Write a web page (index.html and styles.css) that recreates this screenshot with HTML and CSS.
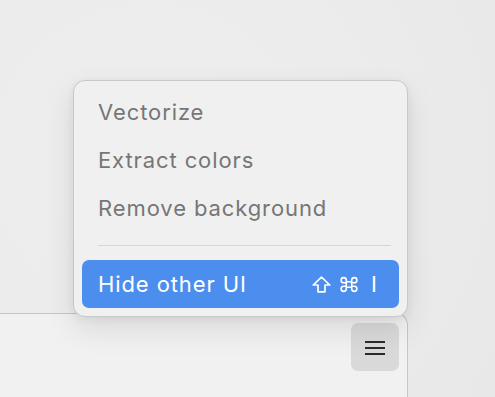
FILE: index.html
```html
<!DOCTYPE html>
<html>
<head>
<meta charset="utf-8">
<link rel="stylesheet" href="styles.css">
</head>
<body>
<div class="stage">
  <div class="panel">
    <button class="menu-btn" aria-label="Menu">
      <svg width="20" height="16" viewBox="0 0 20 16"><rect x="0" y="2" width="20" height="2" fill="#2a2a2a"/><rect x="0" y="8" width="20" height="2" fill="#2a2a2a"/><rect x="0" y="14" width="20" height="2" fill="#2a2a2a"/></svg>
    </button>
  </div>
  <div class="menu">
    <div class="item">Vectorize</div>
    <div class="item">Extract colors</div>
    <div class="item">Remove background</div>
    <div class="sep"></div>
    <div class="item active">
      <span>Hide other UI</span>
      <span class="keys">
        <svg class="k-shift" width="19" height="17" viewBox="0 0 19 17"><path d="M9.5 1.2 L17.8 9 H13 V15.8 H6 V9 H1.2 Z" fill="none" stroke="#fff" stroke-width="1.7" stroke-linejoin="round"/></svg>
        <svg class="k-cmd" width="18" height="17" viewBox="0 0 18 17"><path d="M6.3 5.8 H11.7 V11.2 H6.3 Z M6.3 5.8 V4.2 A2.6 2.6 0 1 0 3.7 6.8 H6.3 V5.8 M11.7 5.8 V4.2 A2.6 2.6 0 1 1 14.3 6.8 H11.7 M6.3 11.2 V12.8 A2.6 2.6 0 1 1 3.7 10.2 H6.3 M11.7 11.2 V12.8 A2.6 2.6 0 1 0 14.3 10.2 H11.7" fill="none" stroke="#fff" stroke-width="1.6"/></svg>
        <span class="k-i">I</span>
      </span>
    </div>
  </div>
</div>
</body>
</html>
```
FILE: styles.css
```css
html, body {
  margin: 0;
  padding: 0;
}
body {
  width: 495px;
  height: 397px;
  overflow: hidden;
  background: radial-gradient(circle at 30% 40%, #eeeeee 0%, #ececec 50%, #e8e8e8 100%);
  font-family: Inter, "Noto Sans", sans-serif;
}
.stage {
  position: relative;
  width: 495px;
  height: 397px;
  padding-top: 313px;
  box-sizing: border-box;
}
.panel {
  margin-left: -20px;
  width: 428px;
  height: 100px;
  box-sizing: border-box;
  background: #f1f1f1;
  border-top: 1px solid #c6c6c6;
  border-right: 1px solid #c6c6c6;
  border-top-right-radius: 12px;
  display: flex;
  justify-content: flex-end;
  align-items: flex-start;
  padding: 9px 8px 0 0;
}
.menu-btn {
  width: 48px;
  height: 48px;
  border: none;
  border-radius: 7px;
  background: #d9d9d9;
  display: flex;
  align-items: center;
  justify-content: center;
  padding: 0;
}
.menu {
  position: absolute;
  left: 73px;
  top: 80px;
  width: 335px;
  box-sizing: border-box;
  background: #f0f0f0;
  border: 1px solid #c8c8c8;
  border-radius: 12px;
  padding: 7px 8px 8px 8px;
  box-shadow: 0 12px 30px rgba(0,0,0,0.10), 0 2px 8px rgba(0,0,0,0.06);
}
.item {
  height: 48px;
  display: flex;
  align-items: center;
  justify-content: space-between;
  padding: 0 22px 0 16px;
  font-size: 22px;
  letter-spacing: 0.9px;
  color: #767676;
  border-radius: 7px;
}
.sep {
  height: 1px;
  background: #d6d6d6;
  margin: 13px 8px 14px 16px;
}
.item.active {
  background: #4c8eee;
  color: #ffffff;
}
.keys {
  display: flex;
  align-items: center;
  gap: 9px;
}
.k-i {
  margin-left: 4px;
  letter-spacing: 0;
}
```
